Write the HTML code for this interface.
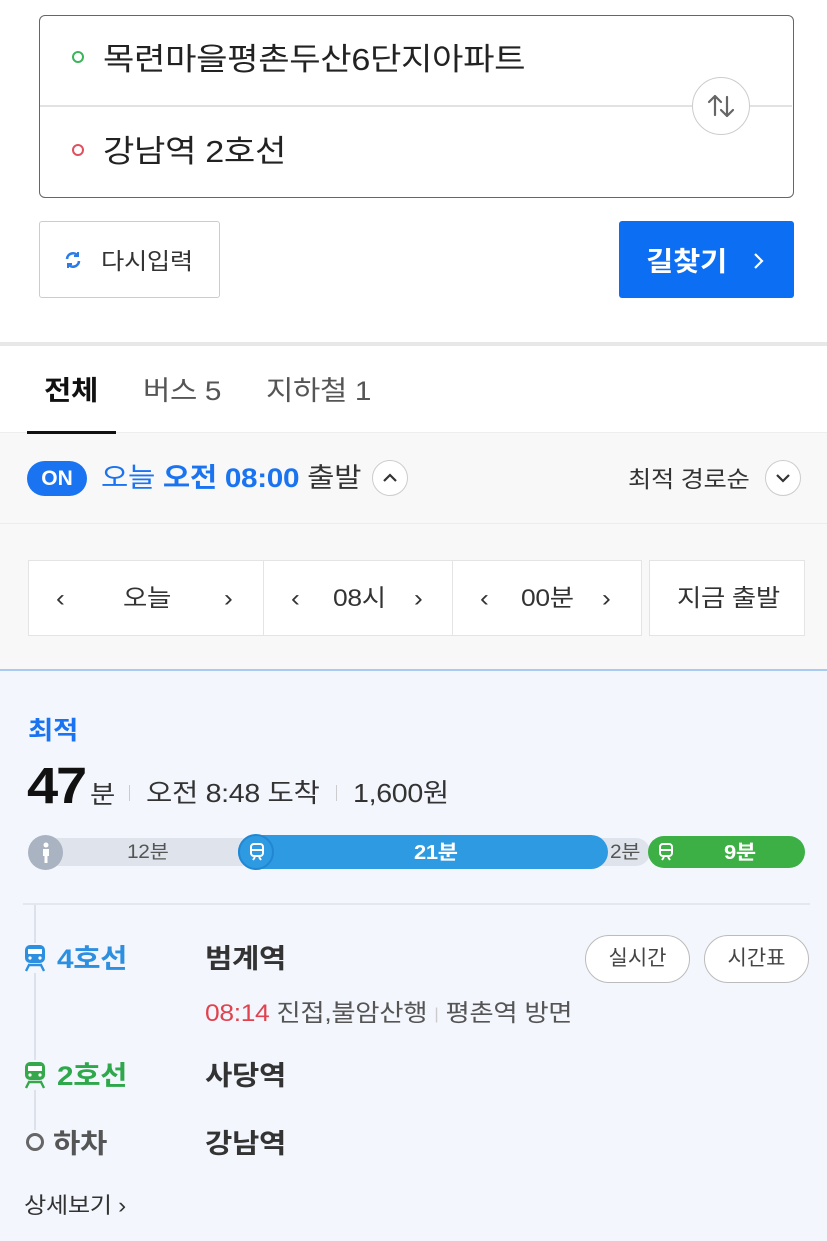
<!DOCTYPE html>
<html><head><meta charset="utf-8">
<style>
*{margin:0;padding:0;box-sizing:border-box}
body{width:827px;height:1241px;position:relative;overflow:hidden;background:#fff;font-family:"Liberation Sans","Noto Sans CJK KR",sans-serif;color:#222}
.a{position:absolute}
.t{position:absolute;white-space:nowrap;line-height:40px;height:40px;letter-spacing:-0.3px;transform:scaleX(1.1);transform-origin:0 50%}
.box{position:absolute;background:#fff;border:1px solid #e4e4e4}
</style></head><body>
<!-- input box -->
<div class="a" style="left:39px;top:15px;width:755px;height:183px;border:1.5px solid #666;border-radius:6px"></div>
<div class="a" style="left:40px;top:105px;width:752px;height:2px;background:#e2e2e2"></div>
<div class="a" style="left:72px;top:51px;width:12px;height:12px;border:2px solid #3cb55a;border-radius:50%"></div>
<div class="a" style="left:72px;top:144px;width:12px;height:12px;border:2px solid #e0505f;border-radius:50%"></div>
<div class="t" style="left:103px;top:40px;font-size:31px;color:#222">목련마을평촌두산6단지아파트</div>
<div class="t" style="left:103px;top:132px;font-size:31px;color:#222">강남역 2호선</div>
<div class="a" style="left:692px;top:77px;width:58px;height:58px;border:1.5px solid #ccc;border-radius:50%;background:#fff"></div>
<svg class="a" style="left:704px;top:89px" width="34" height="34" viewBox="0 0 34 34" fill="none" stroke="#666" stroke-width="2.2" stroke-linecap="round" stroke-linejoin="round"><path d="M11 26V7M5 13l6-6 6 6M23 8v19M17 21l6 6 6-6"/></svg>
<!-- buttons -->
<div class="a" style="left:39px;top:221px;width:181px;height:77px;border:1px solid #ccc;border-radius:3px"></div>
<svg class="a" style="left:63px;top:250px" width="20" height="20" viewBox="0 0 20 20" fill="none" stroke="#2b7be8" stroke-width="2.6"><path d="M4 9a6 6 0 0 1 11-3"/><path d="M16 11a6 6 0 0 1-11 3"/><path d="M15 2v4h-4M5 18v-4h4" stroke-width="2"/></svg>
<div class="t" style="left:101px;top:241px;font-size:23px;color:#333">다시입력</div>
<div class="a" style="left:619px;top:221px;width:175px;height:77px;background:#0c6ff3;border-radius:3px"></div>
<div class="t" style="left:646px;top:242px;font-size:27px;font-weight:bold;color:#fff">길찾기</div>
<svg class="a" style="left:750px;top:250px" width="16" height="22" viewBox="0 0 16 22" fill="none" stroke="#fff" stroke-width="2.2"><path d="M5 4l7 7-7 7"/></svg>
<!-- separator -->
<div class="a" style="left:0;top:342px;width:827px;height:4px;background:#e8e8e8"></div>
<!-- tabs -->
<div class="t" style="left:44px;top:371px;font-size:27px;font-weight:bold;color:#111">전체</div>
<div class="t" style="left:143px;top:371px;font-size:27px;color:#555">버스 5</div>
<div class="t" style="left:266px;top:371px;font-size:27px;color:#555">지하철 1</div>
<div class="a" style="left:0;top:433px;width:827px;height:236px;background:#f8f8f8"></div>
<div class="a" style="left:0;top:432px;width:827px;height:1px;background:#eee"></div>
<div class="a" style="left:27px;top:431px;width:89px;height:3px;background:#111"></div>
<div class="a" style="left:0;top:523px;width:827px;height:1px;background:#ececec"></div>
<!-- ON row -->
<div class="a" style="left:27px;top:461px;width:60px;height:35px;background:#1a73f0;border-radius:18px;color:#fff;font-weight:bold;font-size:21px;line-height:35px;text-align:center">ON</div>
<div class="t" style="left:101px;top:458px;font-size:27px;color:#1a73f0">오늘 <b>오전 08:00</b> <span style="color:#333">출발</span></div>
<div class="a" style="left:372px;top:460px;width:36px;height:36px;border:1.5px solid #ccc;border-radius:50%;background:#fff"></div>
<svg class="a" style="left:380px;top:468px" width="20" height="20" viewBox="0 0 20 20" fill="none" stroke="#333" stroke-width="2.2"><path d="M4 13l6-6 6 6"/></svg>
<div class="t" style="left:628px;top:459px;font-size:23px;color:#333">최적 경로순</div>
<div class="a" style="left:765px;top:460px;width:36px;height:36px;border:1.5px solid #ccc;border-radius:50%;background:#fff"></div>
<svg class="a" style="left:773px;top:468px" width="20" height="20" viewBox="0 0 20 20" fill="none" stroke="#333" stroke-width="2.2"><path d="M4 7l6 6 6-6"/></svg>
<!-- time boxes -->
<div class="box" style="left:28px;top:560px;width:236px;height:76px"></div>
<div class="box" style="left:263px;top:560px;width:190px;height:76px"></div>
<div class="box" style="left:452px;top:560px;width:190px;height:76px"></div>
<div class="box" style="left:649px;top:560px;width:156px;height:76px"></div>
<div class="t" style="left:56px;top:579px;font-size:24px;color:#333">‹</div>
<div class="t" style="left:123px;top:579px;font-size:24px;color:#333">오늘</div>
<div class="t" style="left:224px;top:579px;font-size:24px;color:#333">›</div>
<div class="t" style="left:291px;top:579px;font-size:24px;color:#333">‹</div>
<div class="t" style="left:333px;top:579px;font-size:24px;color:#333">08시</div>
<div class="t" style="left:414px;top:579px;font-size:24px;color:#333">›</div>
<div class="t" style="left:480px;top:579px;font-size:24px;color:#333">‹</div>
<div class="t" style="left:521px;top:579px;font-size:24px;color:#333">00분</div>
<div class="t" style="left:602px;top:579px;font-size:24px;color:#333">›</div>
<div class="t" style="left:677px;top:579px;font-size:24px;color:#333">지금 출발</div>
<!-- result -->
<div class="a" style="left:0;top:669px;width:827px;height:572px;background:#f3f7fd;border-top:2px solid #a9cbf1"></div>
<div class="t" style="left:28px;top:711px;font-size:25px;font-weight:bold;color:#1a73f0">최적</div>
<div class="t" style="left:27px;top:761px;height:50px;font-size:51px;font-weight:bold;color:#111;line-height:50px;letter-spacing:-2px">47</div>
<div class="t" style="left:90px;top:775px;font-size:25px;color:#333">분</div>
<div class="a" style="left:129px;top:785px;width:1px;height:16px;background:#ccc"></div>
<div class="t" style="left:146px;top:773px;font-size:26px;color:#333">오전 8:48 도착</div>
<div class="a" style="left:336px;top:785px;width:1px;height:16px;background:#ccc"></div>
<div class="t" style="left:353px;top:773px;font-size:26px;color:#333">1,600원</div>
<!-- bar -->
<div class="a" style="left:30px;top:838px;width:620px;height:28px;background:#dfe4ec;border-radius:14px"></div>
<div class="a" style="left:28px;top:835px;width:35px;height:35px;background:#a9b3c1;border-radius:50%"></div>
<svg class="a" style="left:36px;top:842px" width="20" height="22" viewBox="0 0 20 22" fill="#fff"><circle cx="10" cy="3" r="2.5"/><path d="M7 7h6v7h-1.5v7h-3v-7H7z"/></svg>
<div class="t" style="left:127px;top:833px;font-size:19px;color:#555">12분</div>
<div class="a" style="left:238px;top:835px;width:370px;height:34px;background:#2e9ae2;border-radius:17px"></div>
<div class="a" style="left:238px;top:834px;width:36px;height:36px;background:#2e9ae2;border-radius:50%;border:2px solid #2187d3"></div>
<div class="t" style="left:414px;top:833px;font-size:20px;font-weight:bold;color:#fff">21분</div>
<div class="t" style="left:610px;top:833px;font-size:19px;color:#555">2분</div>
<div class="a" style="left:648px;top:836px;width:157px;height:32px;background:#3cb044;border-radius:16px"></div>
<div class="t" style="left:724px;top:833px;font-size:20px;font-weight:bold;color:#fff">9분</div>
<svg class="a" style="left:248px;top:842px" width="18" height="20" viewBox="0 0 18 20" fill="none" stroke="#fff" stroke-width="2"><rect x="3" y="2" width="12" height="12" rx="3"/><path d="M3 8h12M5 18l2-3M13 18l-2-3"/></svg>
<svg class="a" style="left:657px;top:842px" width="18" height="20" viewBox="0 0 18 20" fill="none" stroke="#fff" stroke-width="2"><rect x="3" y="2" width="12" height="12" rx="3"/><path d="M3 8h12M5 18l2-3M13 18l-2-3"/></svg>
<!-- divider & timeline -->
<div class="a" style="left:23px;top:903px;width:787px;height:2px;background:#e4e8ee"></div>
<div class="a" style="left:34px;top:905px;width:2px;height:225px;background:#dde2ea"></div>
<svg class="a" style="left:22px;top:943px;background:#f3f7fd" width="26" height="30" viewBox="0 0 26 30" fill="#2d8fe0"><rect x="3" y="2" width="20" height="18" rx="5"/><rect x="6" y="6" width="14" height="5" fill="#fff"/><circle cx="8" cy="15" r="1.6" fill="#fff"/><circle cx="18" cy="15" r="1.6" fill="#fff"/><path d="M6 22h14M4 28l3-6M22 28l-3-6" stroke="#2d8fe0" stroke-width="2.4"/></svg>
<div class="t" style="left:57px;top:939px;font-size:27px;font-weight:bold;color:#2d8fe0">4호선</div>
<div class="t" style="left:205px;top:939px;font-size:27px;font-weight:bold;color:#333">범계역</div>
<div class="a" style="left:585px;top:935px;width:105px;height:48px;border:1.5px solid #bbb;border-radius:24px;font-size:21px;line-height:45px;text-align:center;color:#444;background:#fff">실시간</div>
<div class="a" style="left:704px;top:935px;width:105px;height:48px;border:1.5px solid #bbb;border-radius:24px;font-size:21px;line-height:45px;text-align:center;color:#444;background:#fff">시간표</div>
<div class="t" style="left:205px;top:994px;font-size:24px;color:#555"><span style="color:#e0434f">08:14</span> 진접,불암산행 <span style="color:#ccc;font-size:16px;vertical-align:2px">|</span> 평촌역 방면</div>
<svg class="a" style="left:22px;top:1060px;background:#f3f7fd" width="26" height="30" viewBox="0 0 26 30" fill="#35a84c"><rect x="3" y="2" width="20" height="18" rx="5"/><rect x="6" y="6" width="14" height="5" fill="#fff"/><circle cx="8" cy="15" r="1.6" fill="#fff"/><circle cx="18" cy="15" r="1.6" fill="#fff"/><path d="M6 22h14M4 28l3-6M22 28l-3-6" stroke="#35a84c" stroke-width="2.4"/></svg>
<div class="t" style="left:57px;top:1056px;font-size:27px;font-weight:bold;color:#2ea84b">2호선</div>
<div class="t" style="left:205px;top:1056px;font-size:27px;font-weight:bold;color:#333">사당역</div>
<div class="a" style="left:26px;top:1133px;width:18px;height:18px;border:3px solid #666;border-radius:50%;background:#f3f7fd"></div>
<div class="t" style="left:53px;top:1124px;font-size:27px;font-weight:bold;color:#555">하차</div>
<div class="t" style="left:205px;top:1124px;font-size:27px;font-weight:bold;color:#333">강남역</div>
<div class="t" style="left:24px;top:1186px;font-size:22px;color:#333">상세보기 ›</div>
</body></html>
